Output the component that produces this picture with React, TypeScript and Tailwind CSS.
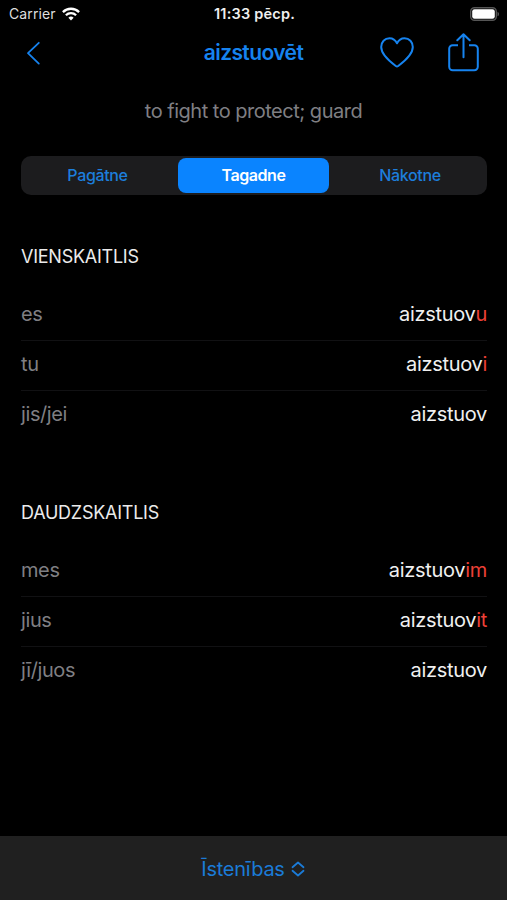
type Form = { pronoun: string; stem: string; ending?: string };

const singular: Form[] = [
  { pronoun: "es", stem: "aizstuov", ending: "u" },
  { pronoun: "tu", stem: "aizstuov", ending: "i" },
  { pronoun: "jis/jei", stem: "aizstuov" },
];

const plural: Form[] = [
  { pronoun: "mes", stem: "aizstuov", ending: "im" },
  { pronoun: "jius", stem: "aizstuov", ending: "it" },
  { pronoun: "jī/juos", stem: "aizstuov" },
];

function StatusBar() {
  return (
    <div className="grid h-7 grid-cols-[1fr_auto_1fr] items-center pl-[9px] pr-[7px] text-white">
      <div className="flex items-center gap-[6px] text-[14px] leading-7 text-[#dedede]">
        <span className="tracking-[0.1px]">Carrier</span>
        <svg width="18" height="14" viewBox="0 0 18 14" fill="none" stroke="#fff" strokeWidth="2.3">
          <path d="M.9 5.1a11.5 11.5 0 0 1 16.2 0" />
          <path d="M3.9 8.3a7.2 7.2 0 0 1 10.2 0" />
          <path d="M9 13.5 6.4 10.8a3.8 3.8 0 0 1 5.2 0Z" fill="#fff" stroke="none" />
        </svg>
      </div>
      <span className="whitespace-nowrap text-[14.5px] font-semibold leading-7 tracking-[0.2px] text-[#efefef]">11:33 pēcp.</span>
      <svg className="justify-self-end" width="30" height="14" viewBox="0 0 30 14">
        <rect x=".7" y=".7" width="25.6" height="12.6" rx="3.8" fill="none" stroke="#555" strokeWidth="1.4" />
        <rect x="2.2" y="2.2" width="22.6" height="9.6" rx="2.3" fill="#fff" />
        <path d="M27.5 4.7c2 .8 2 3.8 0 4.6Z" fill="#555" />
      </svg>
    </div>
  );
}

function NavBar() {
  return (
    <div className="grid h-[50px] grid-cols-[1fr_auto_1fr] items-center pl-[26px] pr-[28px] text-[#1683ef]">
      <svg width="15" height="24" viewBox="0 0 15 24" fill="none" stroke="currentColor" strokeWidth="1.8" strokeLinecap="round" strokeLinejoin="round">
        <path d="M12.8 1.8 2 12.2 12.8 22.6" />
      </svg>
      <h1 className="pl-[2px] text-[21px] font-semibold leading-[50px] tracking-[-0.6px]">aizstuovēt</h1>
      <div className="flex items-center justify-end gap-[34px]">
        <svg width="34" height="32" viewBox="0 0 34 32" fill="none" stroke="currentColor" strokeWidth="2" strokeLinejoin="round">
          <path d="M17 6.300C15.400 3 12.600 1.200 9.500 1.200 4.700 1.200 1.200 5 1.200 10.100c0 7.100 6.600 13.100 14.600 18.900.7.500 1.700.5 2.400 0 8-5.800 14.600-11.800 14.600-18.900 0-5.100-3.500-8.900-8.300-8.900-3.100 0-5.900 1.800-7.500 5.100Z" />
        </svg>
        <svg width="31" height="40" viewBox="0 0 31 40" fill="none" stroke="currentColor" strokeWidth="2" strokeLinecap="round" strokeLinejoin="round">
          <path d="M10 12.200H4.700A3.500 3.500 0 0 0 1.200 15.700V33.800A3.500 3.500 0 0 0 4.700 37.300H26.300A3.500 3.500 0 0 0 29.800 33.800V15.700A3.500 3.500 0 0 0 26.300 12.200H21" strokeLinecap="butt" />
          <path d="M15.500 24.300V1.300M9.300 7.300 15.500 1.300 21.700 7.300" />
        </svg>
      </div>
    </div>
  );
}

function TenseTabs() {
  return (
    <div className="ml-[21px] mr-[20px] grid h-[39px] grid-cols-[155px_155px_1fr] rounded-[10px] bg-[#1c1c1e] text-center text-[16px] font-medium leading-[39px] tracking-[-0.35px] text-[#1d7edb]">
      <button className="pr-[2px]">Pagātne</button>
      <button className="my-[2px] ml-[2px] w-[151px] rounded-[8px] bg-[#0a84ff] font-semibold leading-[35px] tracking-[-0.45px] text-white">Tagadne</button>
      <button className="pl-[2px]">Nākotne</button>
    </div>
  );
}

function Conjugation({ title, forms }: { title: string; forms: Form[] }) {
  return (
    <section className="pl-[21px] pr-[20px]">
      <h2 className="text-[18px] leading-[24px] tracking-[-0.25px] text-[#ebebeb]">{title}</h2>
      <dl className="mt-[22px] divide-y divide-[#111113] text-[20px] leading-[47px] tracking-[-0.3px]">
        {forms.map((f) => (
          <div key={f.pronoun} className="flex h-[50px] justify-between">
            <dt className="tracking-[-0.4px] text-[#7f7f83]">{f.pronoun}</dt>
            <dd className="text-[#f0f0f0]">
              {f.stem}
              {f.ending && <span className="text-[#ed4037]">{f.ending}</span>}
            </dd>
          </div>
        ))}
      </dl>
    </section>
  );
}

export default function App() {
  return (
    <main className="flex h-[900px] w-[507px] flex-col overflow-hidden bg-black font-['Inter',sans-serif]">
      <StatusBar />
      <NavBar />
      <p className="mb-[30px] mt-[18px] text-center text-[20px] leading-[30px] tracking-[-0.5px] text-[#7f7f83]">to fight to protect; guard</p>
      <TenseTabs />
      <div className="mt-[50px] flex flex-col gap-[60px]">
        <Conjugation title="VIENSKAITLIS" forms={singular} />
        <Conjugation title="DAUDZSKAITLIS" forms={plural} />
      </div>
      <footer className="mt-auto flex h-[64px] items-center justify-center gap-[6px] bg-[#202020] pr-[1px] pt-[1px] text-[20px] text-[#1b7bd7]">
        <span className="tracking-[-0.25px]">Īstenības</span>
        <svg width="14" height="16" viewBox="0 0 14 16" fill="none" stroke="currentColor" strokeWidth="1.8" strokeLinecap="round" strokeLinejoin="round">
          <path d="M1.500 6.200 7 1.500 12.500 6.200M1.500 9.800 7 14.500 12.500 9.800" />
        </svg>
      </footer>
    </main>
  );
}
